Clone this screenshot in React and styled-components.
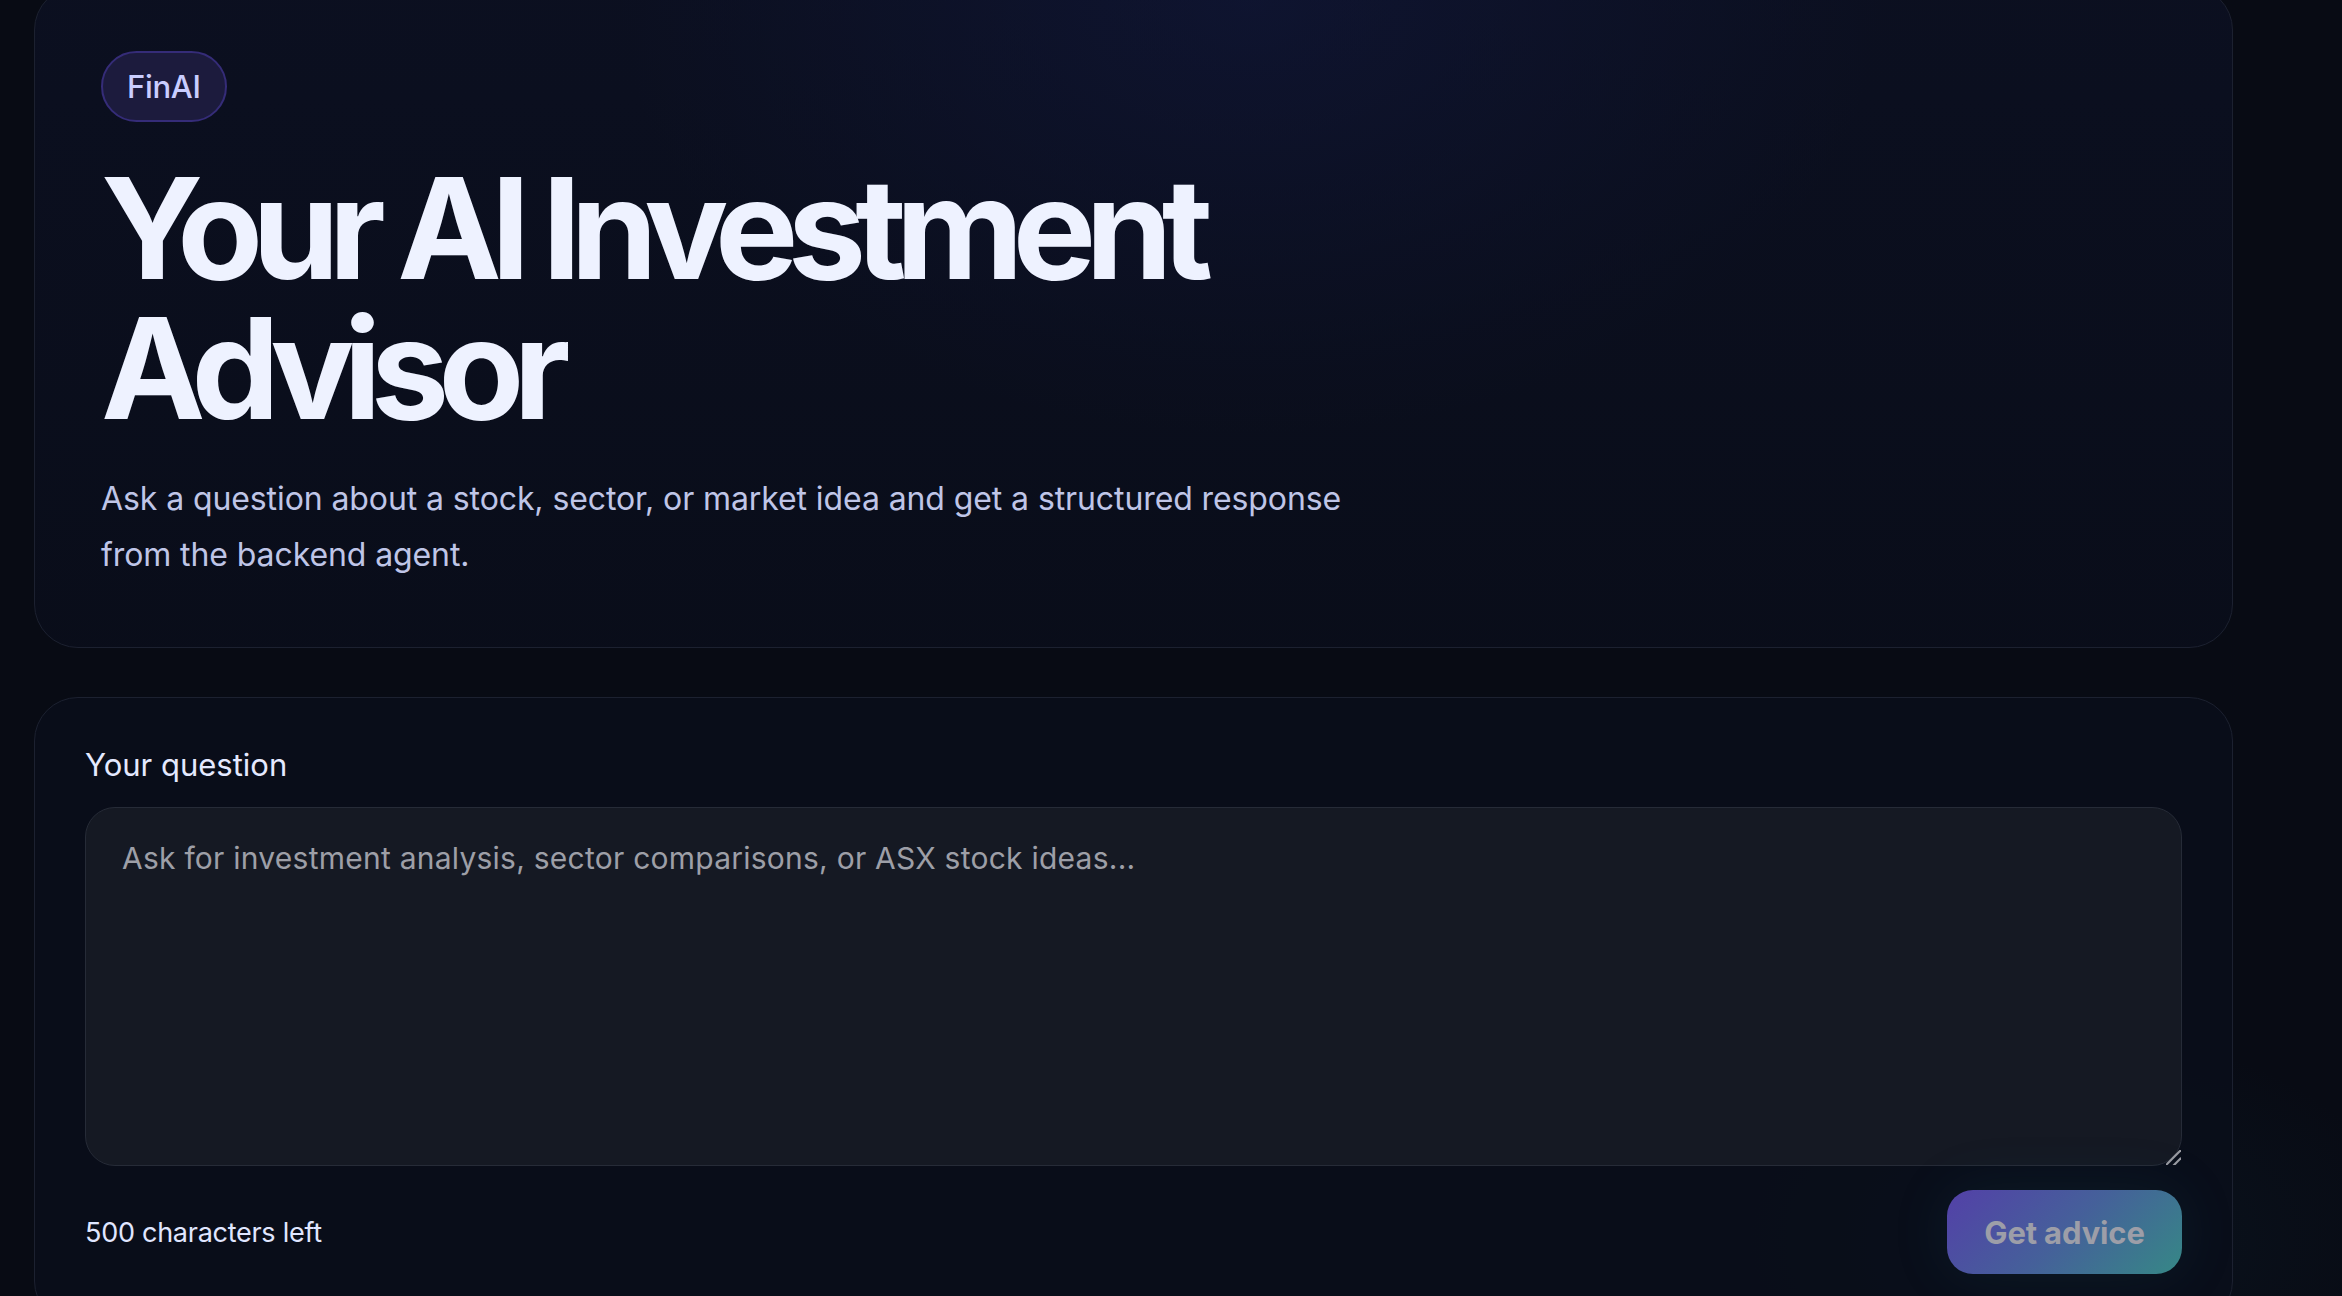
import styled, { createGlobalStyle } from "styled-components";

const GlobalStyle = createGlobalStyle`
  html, body {
    margin: 0;
    padding: 0;
    background-color: #080b14;
    background-image:
      radial-gradient(ellipse 900px 620px at 1250px 0px, rgba(22, 30, 84, 0.55), transparent 70%),
      radial-gradient(ellipse 500px 300px at 2060px 1240px, rgba(22, 60, 80, 0.18), transparent 70%);
    background-repeat: no-repeat;
    min-height: 100vh;
    font-family: Inter, "Noto Sans", sans-serif;
    overflow: hidden;
  }
`;

// grip drawn in the textarea's resize corner
const gripSvg = encodeURIComponent(
  '<svg xmlns="http://www.w3.org/2000/svg" width="26" height="26" viewBox="0 0 26 26">' +
  '<g stroke="#9a9ba2" stroke-width="2.2" stroke-linecap="round">' +
  '<line x1="5" y1="21" x2="20" y2="6"/><line x1="13" y1="21" x2="20" y2="14"/></g></svg>'
);

const Page = styled.main`
  width: 2199px;
  margin: -14px 0 0 34px;
  display: flex;
  flex-direction: column;
  gap: 49px;
`;

const Card = styled.section`
  box-sizing: border-box;
  border: 1.5px solid #1c2130;
  border-radius: 44px;
  background: ${props => props.$hero
    ? "linear-gradient(180deg, rgba(14, 19, 42, 0.55), rgba(10, 14, 28, 0.7))"
    : "rgba(10, 14, 26, 0.92)"};
  padding: ${props => props.$hero ? "64px 66px 64px" : "44px 50px 50px"};
`;

const Badge = styled.span`
  display: inline-flex;
  align-items: center;
  box-sizing: border-box;
  height: 71px;
  padding: 0 24px;
  border-radius: 999px;
  border: 2px solid #352c78;
  background: #1c1b3d;
  color: #c9cdff;
  font-size: 31px;
  font-weight: 500;
  letter-spacing: -0.01em;
`;

// Headline lines are kept tight, the way the hero type is set
const Title = styled.h1`
  margin: 36px 0 0;
  font-size: 140px;
  line-height: 140px;
  font-weight: 700;
  letter-spacing: -0.077em;
  color: #eef2ff;
`;

const TitleLine = styled.span`
  display: block;
  height: 140px;
`;

const Lead = styled.p`
  margin: 33px 0 0;
  max-width: 1300px;
  font-size: 32px;
  line-height: 56px;
  color: #bfc5e7;
  letter-spacing: -0.003em;
`;

const Label = styled.label`
  display: block;
  font-size: 31px;
  line-height: 46px;
  font-weight: 400;
  color: #e4e9ff;
  margin-bottom: 19px;
`;

const Question = styled.textarea`
  display: block;
  box-sizing: border-box;
  width: 100%;
  height: 359px;
  padding: 28px 36px;
  border: 1.5px solid #262b37;
  border-radius: 30px;
  background: #151923;
  color: #e4e9ff;
  font-family: Inter, "Noto Sans", sans-serif;
  font-size: 30px;
  line-height: 45px;
  resize: vertical;
  outline: none;
  letter-spacing: 0.008em;

  &::placeholder {
    color: #9d9fa7;
  }

  &::-webkit-scrollbar {
    width: 26px;
    height: 26px;
    background: transparent;
  }

  &::-webkit-resizer {
    background: url("data:image/svg+xml,${gripSvg}") no-repeat center;
  }
`;

const Footer = styled.div`
  display: flex;
  justify-content: space-between;
  align-items: center;
  margin-top: 24px;
`;

const Counter = styled.span`
  font-size: 27px;
  color: #e0e6ff;
  letter-spacing: -0.01em;
`;

const Submit = styled.button`
  width: 235px;
  height: 84px;
  border: none;
  border-radius: 26px;
  background: linear-gradient(135deg, #5340a8 0%, #45609a 50%, #368886 100%);
  color: #9d9ea8;
  font-family: Inter, "Noto Sans", sans-serif;
  font-size: 31px;
  font-weight: 700;
  letter-spacing: -0.005em;
  box-shadow: 0 0 60px rgba(40, 120, 140, 0.12);
  cursor: not-allowed;
`;

const App = () => {
  const maxChars = 500;
  const question = "";

  return (
    <>
      <GlobalStyle />
      <Page>
        <Card $hero>
          <Badge>FinAI</Badge>
          <Title>
            <TitleLine>Your AI Investment</TitleLine>
            <TitleLine>Advisor</TitleLine>
          </Title>
          <Lead>
            Ask a question about a stock, sector, or market idea and get a structured response from the backend agent.
          </Lead>
        </Card>
        <Card>
          <Label htmlFor="question">Your question</Label>
          <Question
            id="question"
            maxLength={maxChars}
            placeholder="Ask for investment analysis, sector comparisons, or ASX stock ideas..."
          />
          <Footer>
            <Counter>{maxChars - question.length} characters left</Counter>
            <Submit disabled>Get advice</Submit>
          </Footer>
        </Card>
      </Page>
    </>
  );
};

export default App;
